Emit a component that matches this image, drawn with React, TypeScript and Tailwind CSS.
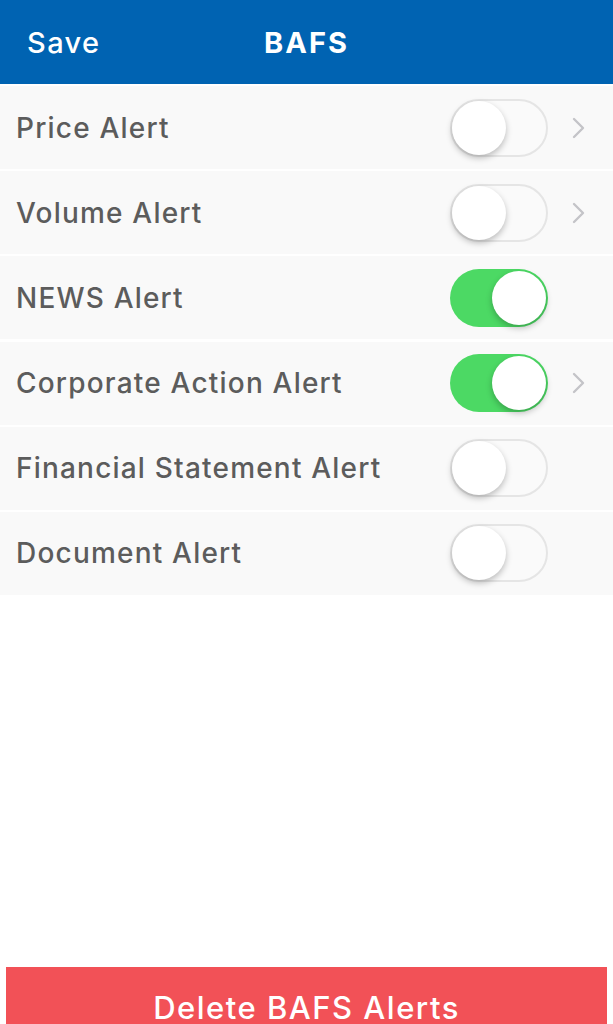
import { useState } from 'react'

type Alert = {
  id: string
  label: string
  on: boolean
  detail: boolean
}

const initialAlerts: Alert[] = [
  { id: 'price', label: 'Price Alert', on: false, detail: true },
  { id: 'volume', label: 'Volume Alert', on: false, detail: true },
  { id: 'news', label: 'NEWS Alert', on: true, detail: false },
  { id: 'corporate', label: 'Corporate Action Alert', on: true, detail: true },
  { id: 'financial', label: 'Financial Statement Alert', on: false, detail: false },
  { id: 'document', label: 'Document Alert', on: false, detail: false },
]

function Toggle({ on, onChange }: { on: boolean; onChange: () => void }) {
  return (
    <button
      type="button"
      role="switch"
      aria-checked={on}
      onClick={onChange}
      className={
        on
          ? 'relative h-[58px] w-[98px] rounded-full bg-[#4cd964] transition-colors'
          : 'relative h-[58px] w-[98px] rounded-full border-[2px] border-[#e5e5e5] bg-[#fafafa] transition-colors'
      }
    >
      <span
        className={
          on
            ? 'absolute top-[2px] left-[42px] h-[54px] w-[54px] rounded-full bg-white shadow-[0_3px_6px_rgba(0,0,0,0.25)]'
            : 'absolute top-0 left-0 h-[54px] w-[54px] rounded-full bg-white shadow-[0_3px_6px_rgba(0,0,0,0.25)]'
        }
      />
    </button>
  )
}

function Chevron() {
  return (
    <svg width="14" height="22" viewBox="0 0 14 22" fill="none">
      <path d="M2 2l9 9-9 9" stroke="#c4c4c8" strokeWidth="2.4" strokeLinecap="round" strokeLinejoin="round" />
    </svg>
  )
}

export default function App() {
  const [alerts, setAlerts] = useState(initialAlerts)

  const flip = (id: string) =>
    setAlerts((list) => list.map((a) => (a.id === id ? { ...a, on: !a.on } : a)))

  return (
    <div className="h-[1024px] overflow-hidden bg-white font-['Inter','Liberation_Sans',sans-serif]">
      <header className="relative flex h-[84px] items-center bg-[#0063b2] px-[27px] text-white">
        <button type="button" className="text-[29px] font-medium leading-none tracking-[1.4px]">
          Save
        </button>
        <h1 className="pointer-events-none absolute left-0 right-0 text-center text-[29px] font-bold leading-none tracking-[2px]">
          BAFS
        </h1>
      </header>

      <div className="flex flex-col gap-[2.2px] pt-[2px]">
        {alerts.map((a) => (
          <div key={a.id} className="flex h-[83px] items-center bg-[#f9f9f9] pl-[16px] pr-[27px]">
            <span className="flex-1 text-[28px] font-medium tracking-[1.2px] text-[#5c5c5c]">{a.label}</span>
            <Toggle on={a.on} onChange={() => flip(a.id)} />
            <span className="ml-[24px] flex w-[14px] justify-center">{a.detail && <Chevron />}</span>
          </div>
        ))}
      </div>

      <button
        type="button"
        className="mx-[6px] mt-[372px] flex h-[82px] w-[601px] items-center justify-center bg-[#f25157] text-[31px] font-medium tracking-[1.5px] text-white"
      >
        Delete BAFS Alerts
      </button>
    </div>
  )
}
